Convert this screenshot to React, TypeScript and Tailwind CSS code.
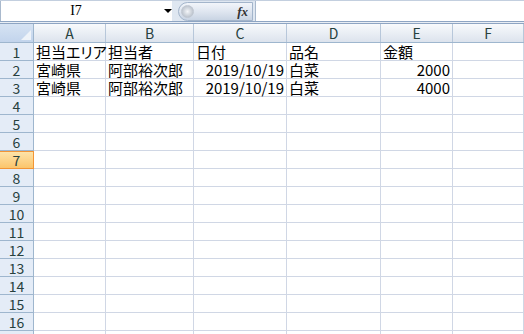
import React from 'react'

const colW = ['w-[72px]', 'w-[88px]', 'w-[93px]', 'w-[94px]', 'w-[72px]', 'flex-1']
const letters = ['A', 'B', 'C', 'D', 'E', 'F']

type Cell = { v: string; right?: boolean }

const data: Cell[][] = [
  [{ v: '担当エリア' }, { v: '担当者' }, { v: '日付' }, { v: '品名' }, { v: '金額' }, { v: '' }],
  [{ v: '宮崎県' }, { v: '阿部裕次郎' }, { v: '2019/10/19', right: true }, { v: '白菜' }, { v: '2000', right: true }, { v: '' }],
  [{ v: '宮崎県' }, { v: '阿部裕次郎' }, { v: '2019/10/19', right: true }, { v: '白菜' }, { v: '4000', right: true }, { v: '' }],
]

const font = "[font-family:'Noto_Sans_CJK_JP',sans-serif] [font-feature-settings:'palt']"

const App = () => {
  const rows = Array.from({ length: 17 }, (_, i) => i + 1)

  return (
    <div className={`w-[524px] h-[334px] overflow-hidden bg-white ${font}`}>
      {/* formula bar */}
      <div className="h-[21px] flex bg-[#dfe7f1] border-t border-[#c3cfdf]">
        <div className="w-[172px] flex items-center bg-white border-l border-[#a9b9cd]">
          <span className="w-[152px] text-center text-[14px] leading-none text-black [font-family:'Liberation_Serif',serif]">I7</span>
          <span className="w-0 h-0 border-l-[4px] border-r-[4px] border-t-[4px] border-l-transparent border-r-transparent border-t-black ml-[13px]" />
        </div>
        <div className="w-[6px]" />
        <div className="w-[75px] h-[19px] self-center flex items-center justify-between rounded-l-full border border-[#a3b5cb] bg-linear-to-b from-[#f2f5fa] via-[#dfe6f0] to-[#c9d4e3] pl-[2px] pr-[4px]">
          <span className="w-[13px] h-[13px] rounded-full bg-radial from-[#f4f6f9] to-[#aab3bf] border border-[#c0c7d1]" />
          <span className="text-[13px] font-bold italic text-[#333] [font-family:'Liberation_Serif',serif] leading-none">fx</span>
        </div>
        <div className="flex-1 bg-white ml-[2px] border-l border-[#a9b9cd]" />
      </div>
      <div className="h-[1px] bg-[#8ea5c3]" />
      <div className="h-[1px] bg-[#e9eef5]" />
      <div className="h-[1px] bg-[#8ea5c3]" />

      {/* column headers */}
      <div className="h-[19px] flex border-b border-[#9eb6ce]">
        <div className="w-[34px] relative border-r border-[#9eb6ce] bg-linear-to-b from-[#d6e3f3] to-[#c2d4ec]">
          <svg className="absolute right-[2px] bottom-[2px]" width="10" height="10" viewBox="0 0 10 10">
            <polygon points="10,0 10,10 0,10" fill="#eef3f9" />
          </svg>
        </div>
        {letters.map((l, i) => (
          <div
            key={l}
            className={`${colW[i]} flex items-center justify-center border-r border-[#b7c7da] bg-linear-to-b from-[#f8fafc] to-[#dce3ed] text-[14px] leading-none text-[#27413e]`}
          >
            {l}
          </div>
        ))}
      </div>

      {/* rows */}
      {rows.map((r) => {
        const cells = data[r - 1]
        const selected = r === 7
        return (
          <div key={r} className="h-[18px] flex">
            <div
              className={`w-[34px] flex items-center justify-center border-r border-b text-[14px] leading-none ${
                selected
                  ? 'bg-linear-to-b from-[#fde3a8] to-[#fbc56b] border-[#f29536] border-t border-t-[#f29536] text-[#27413e]'
                  : 'bg-[#e4ecf7] border-[#9eb6ce] text-[#27413e]'
              }`}
            >
              {r}
            </div>
            {colW.map((w, i) => {
              const c = cells ? cells[i] : undefined
              return (
                <div
                  key={i}
                  className={`${w} flex items-end whitespace-nowrap border-r border-b border-[#d0d7e5] px-[2px] text-[15px] leading-[16px] text-black ${
                    c && c.right ? 'justify-end' : 'justify-start'
                  }`}
                >
                  {c ? c.v : ''}
                </div>
              )
            })}
          </div>
        )
      })}
    </div>
  )
}

export default App
